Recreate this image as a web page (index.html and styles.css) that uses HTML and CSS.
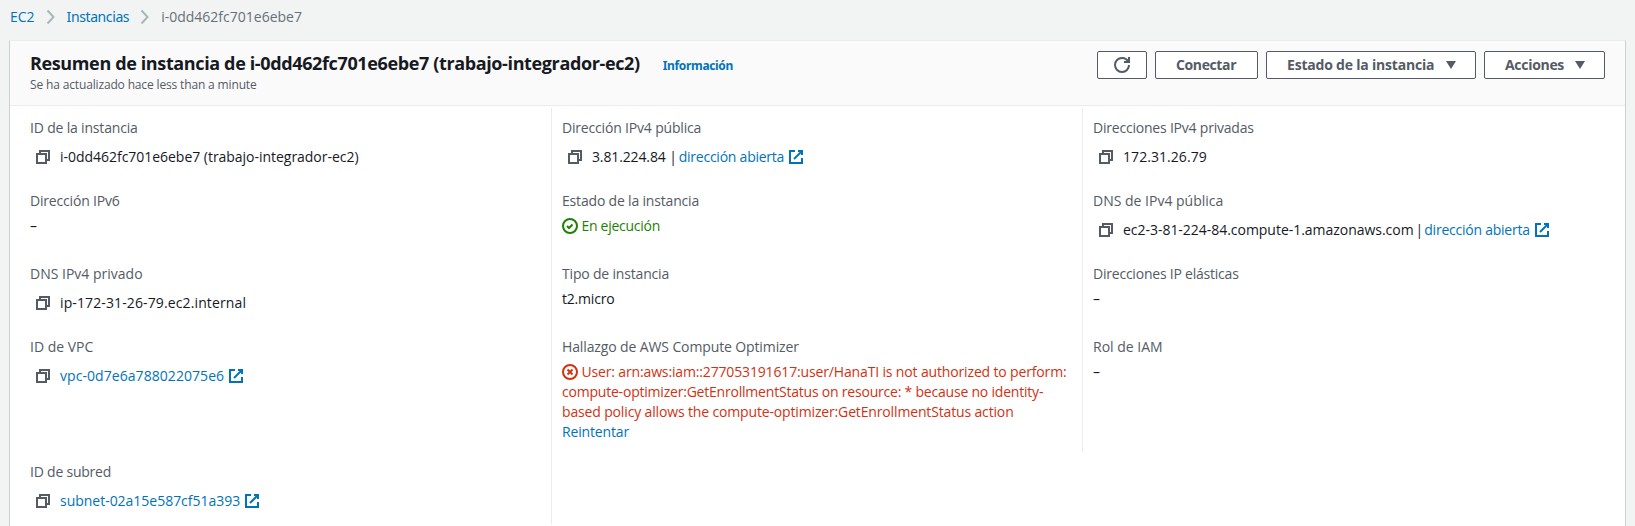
FILE: index.html
```
<!DOCTYPE html>
<html lang="es">
<head>
<meta charset="utf-8">
<title>Resumen de instancia</title>
<link rel="stylesheet" href="styles.css">
</head>
<body>
<svg class="sprite" aria-hidden="true">
  <symbol id="copy" viewBox="0 0 16 16"><path d="M2 5h9v9H2z"/><path d="M5 5V2h9v9h-3"/></symbol>
  <symbol id="external" viewBox="0 0 16 16"><path d="M10 2h4v4"/><path d="m6 10 8-8"/><path d="M14 9.05V14H2V2h5"/></symbol>
  <symbol id="chevron" viewBox="0 0 10 16"><path d="m1.5 1.5 6 6.5-6 6.5"/></symbol>
  <symbol id="caret" viewBox="0 0 10 8"><path d="M0 0h10L5 8z"/></symbol>
</svg>

<nav class="breadcrumbs">
  <a>EC2</a>
  <svg class="chevron"><use href="#chevron"/></svg>
  <a class="crumb-instances">Instancias</a>
  <svg class="chevron"><use href="#chevron"/></svg>
  <span class="crumb-current">i-0dd462fc701e6ebe7</span>
</nav>

<main class="panel">
  <header class="header">
    <div class="heading">
      <div class="title-row">
        <h1>Resumen de instancia de i-0dd462fc701e6ebe7 (trabajo-integrador-ec2)</h1>
        <a class="info">Información</a>
      </div>
      <p class="updated">Se ha actualizado hace less than a minute</p>
    </div>
    <div class="actions">
      <button class="btn refresh" aria-label="Actualizar"><svg class="icon" viewBox="0 0 16 16"><path d="M10 5h5V0"/><path d="M15 8a6.957 6.957 0 0 1-7 7 6.957 6.957 0 0 1-7-7 6.957 6.957 0 0 1 7-7 6.87 6.87 0 0 1 6.3 4"/></svg></button>
      <button class="btn connect">Conectar</button>
      <button class="btn state"><span>Estado de la instancia</span><svg class="caret"><use href="#caret"/></svg></button>
      <button class="btn more"><span>Acciones</span><svg class="caret"><use href="#caret"/></svg></button>
    </div>
  </header>

  <section class="grid">
    <div class="cell">
      <div class="label snug">ID de la instancia</div>
      <div class="value copyable"><svg class="icon copy"><use href="#copy"/></svg><span class="instance-id">i-0dd462fc701e6ebe7 (trabajo-integrador-ec2)</span></div>
    </div>
    <div class="cell">
      <div class="label snug">Dirección IPv4 pública</div>
      <div class="value copyable"><svg class="icon copy"><use href="#copy"/></svg><span class="ip">3.81.224.84 |</span><a class="open">dirección abierta</a><svg class="icon external"><use href="#external"/></svg></div>
    </div>
    <div class="cell">
      <div class="label private-label">Direcciones IPv4 privadas</div>
      <div class="value copyable"><svg class="icon copy"><use href="#copy"/></svg><span class="private-ip">172.31.26.79</span></div>
    </div>

    <div class="cell">
      <div class="label snug">Dirección IPv6</div>
      <div class="value plain">–</div>
    </div>
    <div class="cell">
      <div class="label snug">Estado de la instancia</div>
      <div class="value plain running"><svg class="icon status" viewBox="0 0 16 16"><circle cx="8" cy="8" r="7"/><path d="m5 8 2 2 3.52-3.52"/></svg> En ejecución</div>
    </div>
    <div class="cell">
      <div class="label">DNS de IPv4 pública</div>
      <div class="value copyable"><svg class="icon copy"><use href="#copy"/></svg><span class="dns">ec2-3-81-224-84.compute-1.amazonaws.com</span><span class="bar">|</span><a class="open">dirección abierta</a><svg class="icon external"><use href="#external"/></svg></div>
    </div>

    <div class="cell">
      <div class="label">DNS IPv4 privado</div>
      <div class="value copyable"><svg class="icon copy"><use href="#copy"/></svg><span class="private-dns">ip-172-31-26-79.ec2.internal</span></div>
    </div>
    <div class="cell">
      <div class="label snug">Tipo de instancia</div>
      <div class="value plain type">t2.micro</div>
    </div>
    <div class="cell">
      <div class="label tight">Direcciones IP elásticas</div>
      <div class="value plain">–</div>
    </div>

    <div class="cell">
      <div class="label">ID de VPC</div>
      <div class="value copyable"><svg class="icon copy"><use href="#copy"/></svg><a class="vpc">vpc-0d7e6a788022075e6</a><svg class="icon external"><use href="#external"/></svg></div>
    </div>
    <div class="cell">
      <div class="label optimizer">Hallazgo de AWS Compute Optimizer</div>
      <div class="value plain error"><svg class="icon status" viewBox="0 0 16 16"><circle cx="8" cy="8" r="7"/><path d="m5.5 5.5 5 5M10.5 5.5l-5 5"/></svg> User: arn:aws:iam::277053191617:user/HanaTI is not authorized to perform:<br><span class="resource">compute-optimizer:GetEnrollmentStatus on resource: * because no identity-</span><br>based policy allows the compute-optimizer:GetEnrollmentStatus action<br><a>Reintentar</a></div>
    </div>
    <div class="cell">
      <div class="label">Rol de IAM</div>
      <div class="value plain">–</div>
    </div>

    <div class="cell">
      <div class="label tight">ID de subred</div>
      <div class="value copyable"><svg class="icon copy"><use href="#copy"/></svg><a class="subnet">subnet-02a15e587cf51a393</a><svg class="icon external"><use href="#external"/></svg></div>
    </div>
  </section>
</main>
</body>
</html>
```
FILE: styles.css
```
* { box-sizing: border-box; }

body {
  margin: 0;
  height: 526px;
  overflow: hidden;
  background: #f2f3f3;
  color: #16191f;
  font: 14px/20px "Open Sans", "Noto Sans", sans-serif;
  display: flex;
  flex-direction: column;
}

a { color: #0073bb; }
svg { fill: none; flex: none; display: block; }
.sprite { width: 0; height: 0; position: absolute; }
.icon { width: 16px; height: 16px; stroke: currentColor; stroke-width: 2; }

.breadcrumbs {
  height: 40px;
  flex: none;
  padding: 7px 0 0 10px;
  display: flex;
  color: #687078;
}
.chevron {
  width: 10px;
  height: 16px;
  margin: 2px 11px 0 11px;
  stroke: #aab7b8;
  stroke-width: 2;
}
.crumb-instances { font-family: "Noto Sans", sans-serif; letter-spacing: -0.4px; }

.panel {
  flex: 1;
  margin: 0 9px;
  background: #fff;
  border: 1px solid #cbd1d2;
  border-top-color: #eaeded;
  border-bottom: 0;
}

.header {
  height: 65px;
  background: #fafafa;
  border-bottom: 1px solid #eaeded;
  padding: 10px 20px 0;
  display: flex;
  justify-content: space-between;
}
.title-row { display: flex; align-items: baseline; gap: 23px; padding-top: 1px; }
h1 { margin: 0; font-size: 18px; line-height: 22px; font-weight: 700; letter-spacing: -0.37px; }
.info { font: 700 12px/20px "Noto Sans", sans-serif; letter-spacing: -0.34px; }
.updated { margin: 0; font-size: 12px; line-height: 18px; color: #545b64; letter-spacing: -0.15px; }

.actions { display: flex; gap: 8px; align-items: flex-start; }
.btn {
  height: 28px;
  padding: 0 20px;
  border: 1px solid #545b64;
  border-radius: 2px;
  background: #fff;
  color: #545b64;
  font: 700 14px/20px "Open Sans", sans-serif;
  display: flex;
  align-items: center;
  justify-content: space-between;
}
.refresh { width: 50px; padding: 0 16px; }
.connect { width: 103px; letter-spacing: -0.38px; }
.state { width: 210px; letter-spacing: -0.2px; }
.more { width: 121px; letter-spacing: -0.3px; }
.caret { width: 10px; height: 8px; fill: #545b64; }
.state .caret, .more .caret { margin-right: -1px; }

.grid {
  display: grid;
  grid-template-columns: 542px 531px 1fr;
  grid-template-rows: 73px 73px 73px 125px 73px;
  padding-top: 2px;
}
.cell { padding: 10px 9px 0 10px; border-right: 1px solid #eaeded; white-space: nowrap; }
.cell:nth-child(3n + 1) { padding-left: 20px; }
.cell:nth-child(3n) { border-right: 0; }

.label { color: #545b64; margin-bottom: 4px; }
.snug { letter-spacing: -0.18px; }
.tight { letter-spacing: -0.22px; }
.private-label { letter-spacing: -0.21px; }
.optimizer { letter-spacing: -0.12px; }

.plain { padding-top: 1px; }
.copyable { display: flex; align-items: center; height: 30px; }
.copy { color: #545b64; margin: 0 9px 0 5px; }
.external { color: #0073bb; margin-left: 4px; }
.instance-id { letter-spacing: -0.03px; }
.ip { margin-right: 2px; letter-spacing: -0.13px; }
.dns { letter-spacing: -0.03px; }
.bar { margin: 0 1px 0 2px; }
.open { letter-spacing: -0.24px; }
.private-ip { letter-spacing: 0.06px; }
.private-dns { letter-spacing: 0.12px; }
.vpc { letter-spacing: 0.06px; }
.subnet { letter-spacing: -0.02px; }
.type { letter-spacing: -0.2px; }

.status { display: inline-block; vertical-align: -3px; }
.running { color: #1d8102; letter-spacing: -0.26px; }
.error { color: #d13212; letter-spacing: -0.15px; }
.resource { letter-spacing: -0.21px; }
```
